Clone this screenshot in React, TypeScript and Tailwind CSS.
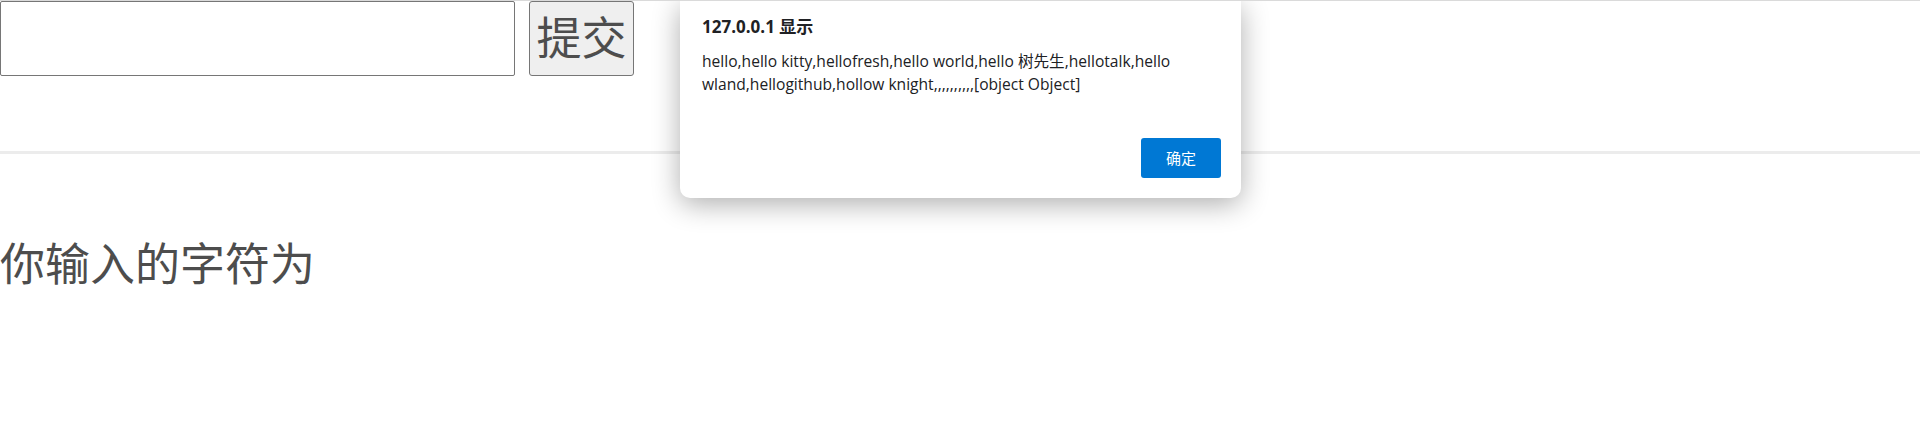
import React from "react";

export default function App() {
  return (
    <div
      className="relative w-[1920px] h-[448px] bg-white overflow-hidden border-t border-[#dadada]"
      style={{ fontFamily: '"Noto Sans", "Noto Sans CJK SC", sans-serif' }}
    >
      <div className="flex items-start gap-[14px]">
        <input
          className="w-[515px] h-[75px] border border-[#767676] rounded-[2px] bg-white outline-none"
          type="text"
        />
        <button className="w-[105px] h-[75px] border border-[#767676] rounded-[3px] bg-[#efefef] text-[45px] leading-none text-[#4d4d4d] flex items-center justify-center pb-[2px]">
          提交
        </button>
      </div>
      <div className="mt-[75px] h-[3px] bg-[#ececec]" />
      <h1 className="mt-[80px] text-[45px] leading-[60px] text-[#4d4d4d] font-normal">你输入的字符为</h1>

      <div className="absolute left-[680px] top-0 w-[561px] h-[197px] bg-white rounded-b-[10px] shadow-[0_6px_28px_rgba(0,0,0,0.32)] flex flex-col px-[22px]">
        <div
          className="pt-[15px] text-[17px] leading-[22px] font-bold text-[#202124]"
          style={{ fontFamily: '"Open Sans", "Noto Sans CJK SC", sans-serif' }}
        >
          127.0.0.1 显示
        </div>
        <div
          className="mt-[12px] text-[15.6px] leading-[23px] text-[#202124]"
          style={{ fontFamily: '"Open Sans", "Noto Sans CJK SC", sans-serif' }}
        >
          hello,hello kitty,hellofresh,hello world,hello 树先生,hellotalk,hello
          <br />
          wland,hellogithub,hollow knight,,,,,,,,,,[object Object]
        </div>
        <div className="flex-1" />
        <div className="flex justify-end pb-[20px]">
          <button
            className="w-[80px] h-[40px] rounded-[3px] bg-[#0078d4] text-white text-[15px] flex items-center justify-center mr-[-2px]"
            style={{ fontFamily: '"Noto Sans CJK SC", sans-serif' }}
          >
            确定
          </button>
        </div>
      </div>
    </div>
  );
}
